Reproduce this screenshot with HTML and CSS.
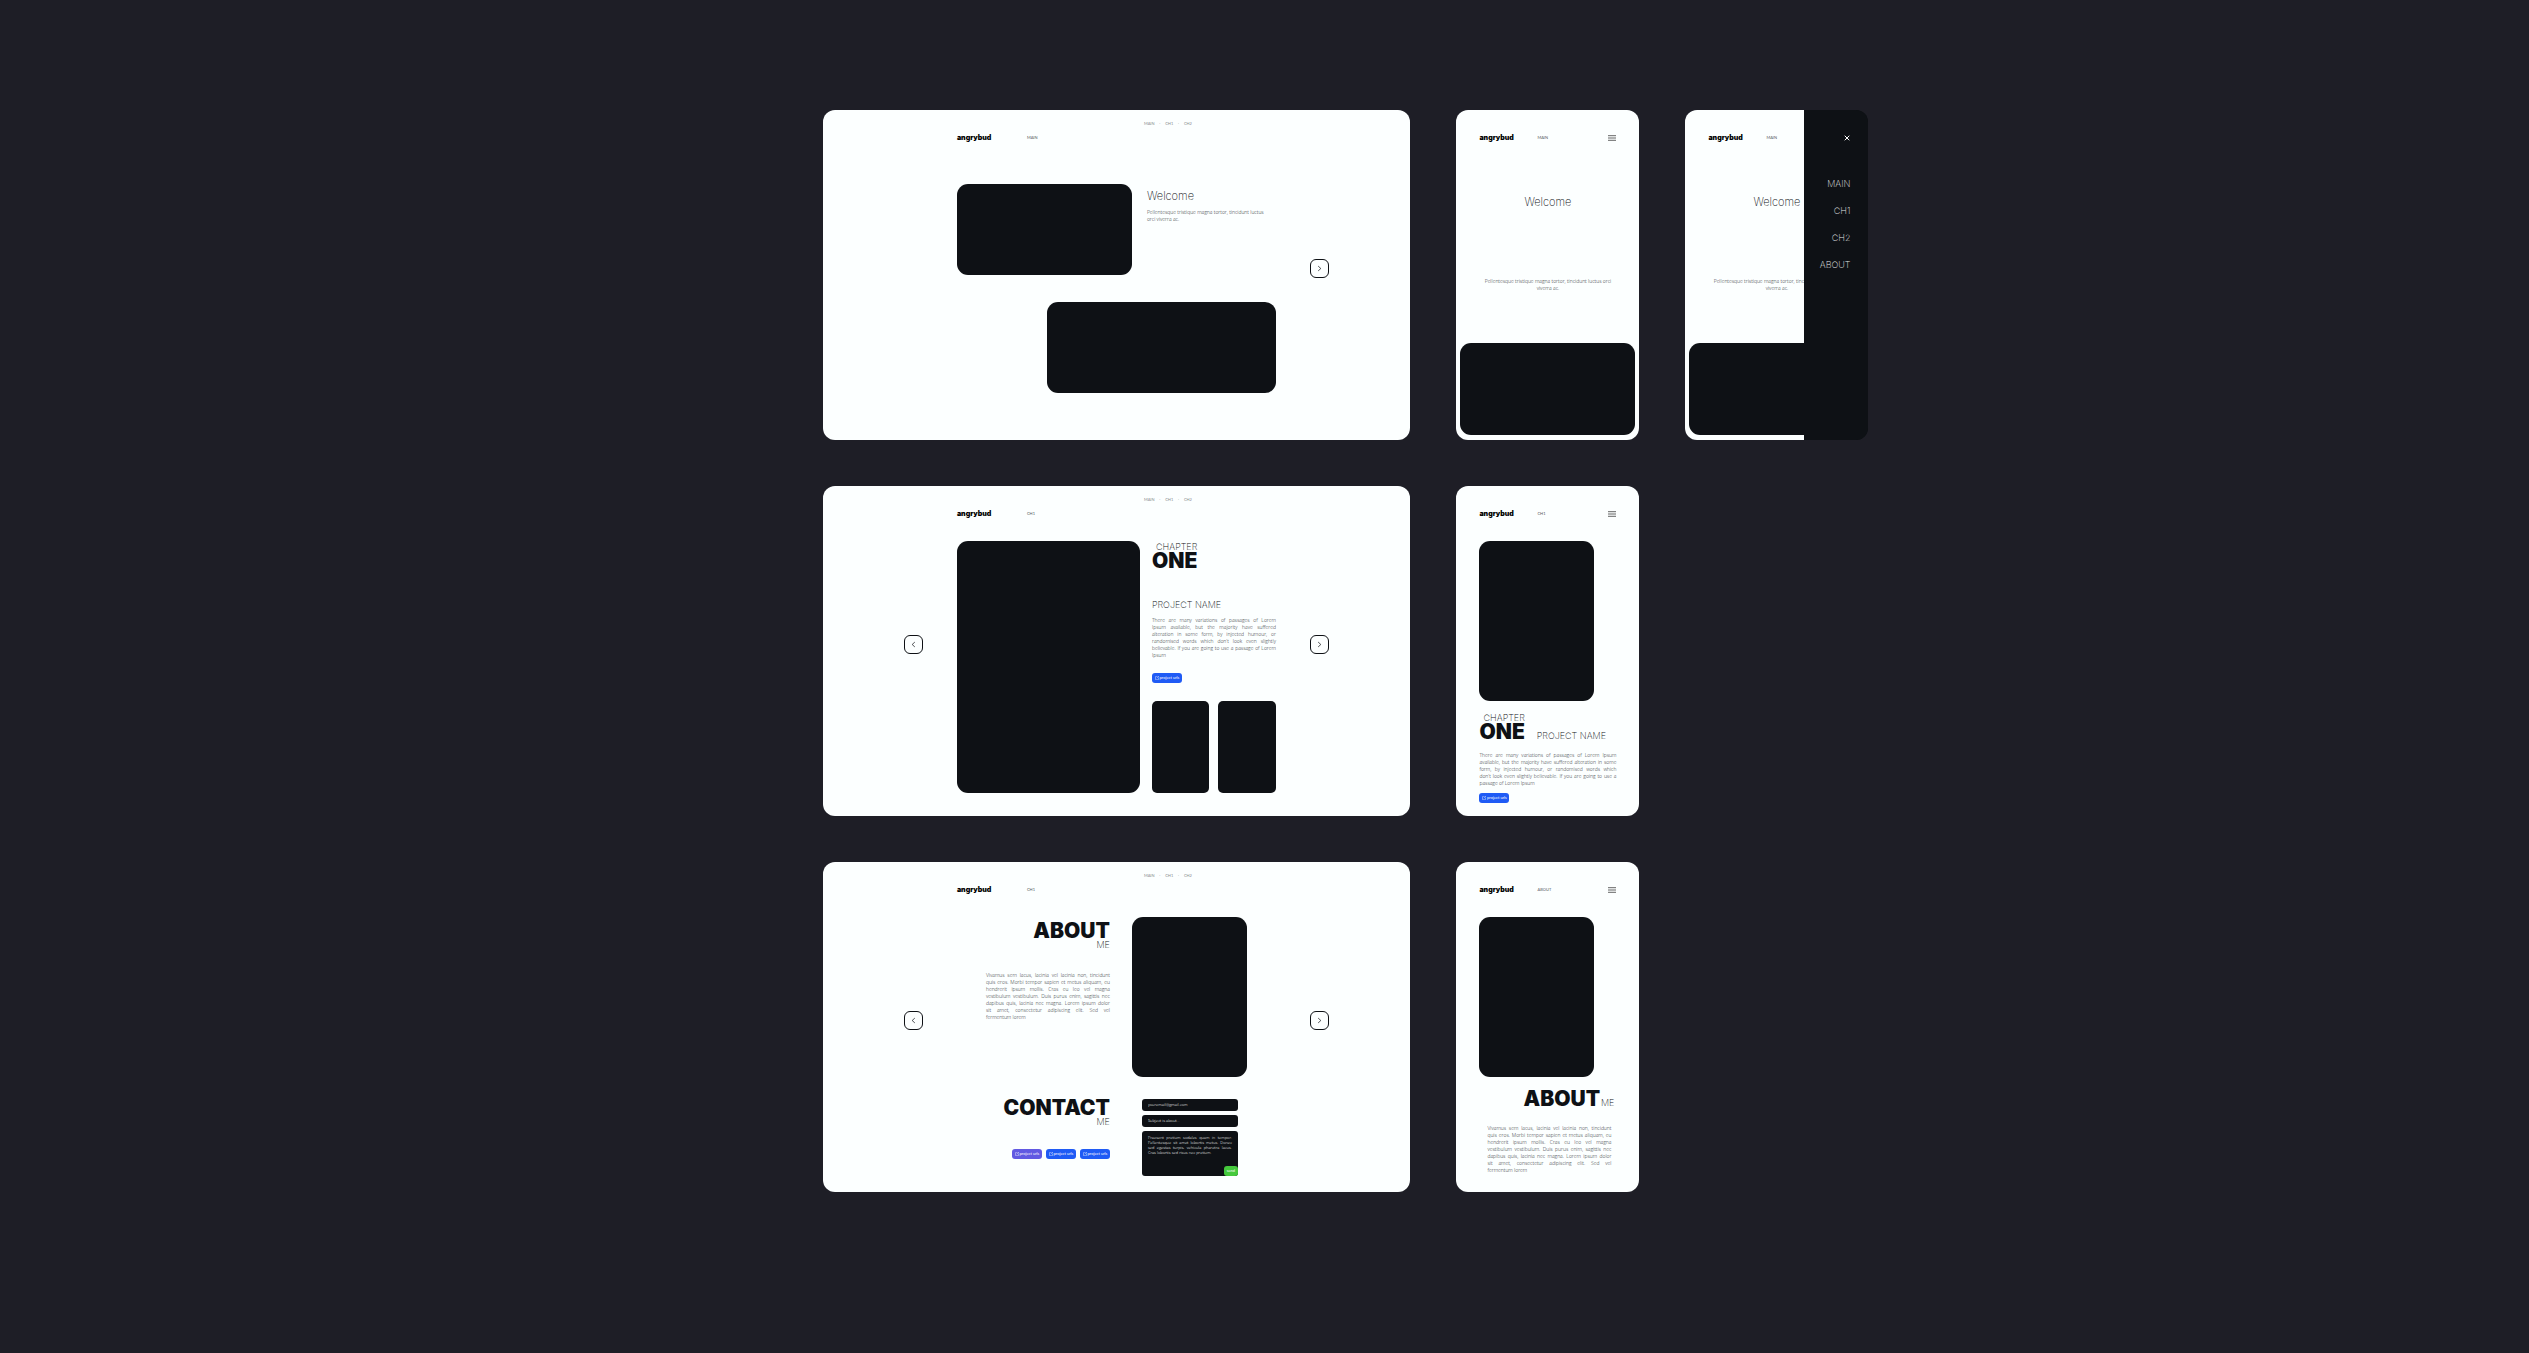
FILE: index.html
```
<!DOCTYPE html>
<html lang="en">
<head>
<meta charset="utf-8">
<meta name="viewport" content="width=device-width, initial-scale=1">
<title>angrybud</title>
<link rel="stylesheet" href="styles.css">
</head>
<body>
<svg width="0" height="0" class="defs" aria-hidden="true">
  <symbol id="next" viewBox="0 0 19 19"><path d="M8 6.800l3 2.700-3 2.700" fill="none" stroke="currentColor" stroke-width=".8"/></symbol>
  <symbol id="prev" viewBox="0 0 19 19"><path d="M11 6.800l-3 2.700 3 2.700" fill="none" stroke="currentColor" stroke-width=".8"/></symbol>
  <symbol id="burger" viewBox="0 0 8 6"><path d="M0 .7h8M0 3h8M0 5.300h8" fill="none" stroke="currentColor" stroke-width=".7"/></symbol>
  <symbol id="close" viewBox="0 0 6 6"><path d="M.7.7l4.600 4.600M5.300.7L.7 5.300" fill="none" stroke="currentColor" stroke-width="1"/></symbol>
  <symbol id="out" viewBox="0 0 4 4"><path d="M2 .6H.5v3h3V2M2.400.4h1.200v1.200M3.500.5L1.800 2.200" fill="none" stroke="currentColor" stroke-width=".4"/></symbol>
</svg>
<main class="board">

  <section class="screen desktop">
    <div class="content">
      <nav class="crumbs"><a href="#main">MAIN</a><i>·</i><a href="#ch1">CH1</a><i>·</i><a href="#ch2">CH2</a></nav>
      <header class="bar"><strong class="brand">angrybud</strong><span class="where">MAIN</span></header>
      <div class="hero">
        <div class="shot wide"></div>
        <div class="intro">
          <h1 class="welcome">Welcome</h1>
          <p class="copy">Pellentesque tristique magna tortor, tincidunt luctus<br>orci viverra ac.</p>
        </div>
      </div>
      <div class="shot wider"></div>
    </div>
    <button class="arrow right" aria-label="Next"><svg><use href="#next"/></svg></button>
  </section>

  <section class="screen mobile">
    <header class="bar"><strong class="brand">angrybud</strong><span class="where">MAIN</span><button class="icon" aria-label="Menu"><svg class="burger"><use href="#burger"/></svg></button></header>
    <h1 class="welcome">Welcome</h1>
    <p class="copy middle">Pellentesque tristique magna tortor, tincidunt luctus orci<br>viverra ac.</p>
    <div class="shot foot"></div>
  </section>

  <section class="screen mobile open">
    <header class="bar"><strong class="brand">angrybud</strong><span class="where">MAIN</span></header>
    <h1 class="welcome">Welcome</h1>
    <p class="copy middle">Pellentesque tristique magna tortor, tincidunt luctus orci<br>viverra ac.</p>
    <div class="shot foot"></div>
    <nav class="drawer">
      <button class="icon" aria-label="Close"><svg class="close"><use href="#close"/></svg></button>
      <a href="#main">MAIN</a><a href="#ch1">CH1</a><a href="#ch2">CH2</a><a href="#about">ABOUT</a>
    </nav>
  </section>

  <section class="screen desktop">
    <button class="arrow left" aria-label="Previous"><svg><use href="#prev"/></svg></button>
    <div class="content">
      <nav class="crumbs"><a href="#main">MAIN</a><i>·</i><a href="#ch1">CH1</a><i>·</i><a href="#ch2">CH2</a></nav>
      <header class="bar"><strong class="brand">angrybud</strong><span class="where">CH1</span></header>
      <div class="chapter">
        <div class="shot"></div>
        <div class="details">
          <h2 class="title"><span class="thin">CHAPTER</span><b>ONE</b></h2>
          <h3 class="thin project">PROJECT NAME</h3>
          <p class="copy lines"><span>There are many variations of passages of Lorem</span><span>Ipsum available, but the majority have suffered</span><span>alteration in some form, by injected humour, or</span><span>randomised words which don't look even slightly</span><span>believable. If you are going to use a passage of Lorem</span><span>Ipsum</span></p>
          <a class="tag" href="#project"><svg><use href="#out"/></svg>project urls</a>
          <div class="thumbs"><div class="shot small"></div><div class="shot small"></div></div>
        </div>
      </div>
    </div>
    <button class="arrow right" aria-label="Next"><svg><use href="#next"/></svg></button>
  </section>

  <section class="screen mobile first">
    <header class="bar"><strong class="brand">angrybud</strong><span class="where">CH1</span><button class="icon" aria-label="Menu"><svg class="burger"><use href="#burger"/></svg></button></header>
    <div class="shot portrait"></div>
    <div class="heads">
      <h2 class="title"><span class="thin">CHAPTER</span><b>ONE</b></h2>
      <h3 class="thin">PROJECT NAME</h3>
    </div>
    <p class="copy lines"><span>There are many variations of passages of Lorem Ipsum</span><span>available, but the majority have suffered alteration in some</span><span>form, by injected humour, or randomised words which</span><span>don't look even slightly believable. If you are going to use a</span><span>passage of Lorem Ipsum</span></p>
    <a class="tag" href="#project"><svg><use href="#out"/></svg>project urls</a>
  </section>

  <section class="screen desktop">
    <button class="arrow left" aria-label="Previous"><svg><use href="#prev"/></svg></button>
    <div class="content">
      <nav class="crumbs"><a href="#main">MAIN</a><i>·</i><a href="#ch1">CH1</a><i>·</i><a href="#ch2">CH2</a></nav>
      <header class="bar"><strong class="brand">angrybud</strong><span class="where">CH1</span></header>
      <div class="about">
        <div class="bio">
          <h2 class="title"><b>ABOUT</b><span class="thin">ME</span></h2>
          <p class="copy lines"><span>Vivamus sem lacus, lacinia vel lacinia non, tincidunt</span><span>quis eros. Morbi tempor sapien et metus aliquam, eu</span><span>hendrerit ipsum mollis. Cras eu leo vel magna</span><span>vestibulum vestibulum. Duis purus enim, sagittis nec</span><span>dapibus quis, lacinia nec magna. Lorem ipsum dolor</span><span>sit amet, consectetur adipiscing elit. Sed vel</span><span>fermentum lorem</span></p>
        </div>
        <div class="shot portrait"></div>
      </div>
      <div class="about contact">
        <div class="bio">
          <h2 class="title"><b>CONTACT</b><span class="thin">ME</span></h2>
          <div class="tags">
            <a class="tag violet" href="#project"><svg><use href="#out"/></svg>project urls</a>
            <a class="tag" href="#project"><svg><use href="#out"/></svg>project urls</a>
            <a class="tag" href="#project"><svg><use href="#out"/></svg>project urls</a>
          </div>
        </div>
        <form class="form">
          <input type="email" aria-label="Email" value="youremail@gmail.com">
          <input type="text" aria-label="Subject" value="Subject is about...">
          <div class="message">
            <textarea aria-label="Message">Praesent pretium sodales quam in tempor. Pellentesque sit amet lobortis metus. Donec sed egestas turpis, vehicula pharetra lacus. Cras lobortis sed risus nec pretium.</textarea>
            <button class="send" type="button">send</button>
          </div>
        </form>
      </div>
    </div>
    <button class="arrow right" aria-label="Next"><svg><use href="#next"/></svg></button>
  </section>

  <section class="screen mobile me">
    <header class="bar"><strong class="brand">angrybud</strong><span class="where">ABOUT</span><button class="icon" aria-label="Menu"><svg class="burger"><use href="#burger"/></svg></button></header>
    <div class="shot portrait"></div>
    <h2 class="title inline"><b>ABOUT</b><span class="thin">ME</span></h2>
    <p class="copy lines"><span>Vivamus sem lacus, lacinia vel lacinia non, tincidunt</span><span>quis eros. Morbi tempor sapien et metus aliquam, eu</span><span>hendrerit ipsum mollis. Cras eu leo vel magna</span><span>vestibulum vestibulum. Duis purus enim, sagittis nec</span><span>dapibus quis, lacinia nec magna. Lorem ipsum dolor</span><span>sit amet, consectetur adipiscing elit. Sed vel</span><span>fermentum lorem</span></p>
  </section>

</main>
</body>
</html>
```
FILE: styles.css
```
:root {
  --night: #1e1e26;
  --paper: #fcffff;
  --ink: #0e1115;
  --blue: #1f5bf5;
}
* { box-sizing: border-box; }
body {
  margin: 0;
  min-height: 100vh;
  background: var(--night);
  color: var(--ink);
  font-family: Lato, "Liberation Sans", sans-serif;
}
.defs { position: absolute; }
h1, h2, h3, p { margin: 0; font-weight: 200; }
a { color: inherit; text-decoration: none; }
button { padding: 0; border: 0; background: none; color: inherit; font: inherit; }
svg { display: block; }

/* artboards */
.board {
  display: grid;
  grid-template-columns: 587fr 183fr 183fr;
  gap: 46px;
  padding: 110px 26.12% 110px 32.56%;
}
.screen {
  min-height: 330px;
  border-radius: 12px;
  background: var(--paper);
  overflow: hidden;
}
.desktop { grid-column: 1; display: grid; grid-template-columns: 1fr 320px 1fr; }
.desktop .content { grid-column: 2; }
.mobile { padding: 0 23px; position: relative; display: flex; flex-direction: column; }
.open { background: linear-gradient(to left, var(--ink) 64px, var(--paper) 64px); }

/* header */
.crumbs {
  display: flex;
  justify-content: space-between;
  width: 48px;
  margin-left: 187px;
  padding-top: 11px;
  font-size: 4px;
  line-height: 6px;
  color: #888c8e;
}
.crumbs i { font-style: normal; }
.bar {
  display: grid;
  grid-template-columns: 70px 1fr auto;
  align-items: center;
  height: 10px;
  margin-top: 6px;
}
.mobile .bar { grid-template-columns: 58px 1fr auto; margin-top: 23px; flex: none; }
.brand { font: 900 7px/10px Inter, sans-serif; color: #000; }
.where { font-size: 4px; line-height: 10px; color: #55595d; }
.burger { width: 8px; height: 6px; color: #222; }
.close { width: 6px; height: 6px; }

/* shared pieces */
.shot { border-radius: 11px; background: var(--ink); }
.small { border-radius: 5px; }
.portrait { width: 115px; height: 160px; }
.copy { font: 300 5px/7px "Open Sans", sans-serif; color: #24282c; white-space: nowrap; }
.lines span { display: block; text-align-last: justify; }
.lines span:last-child { text-align-last: left; }
.welcome { font: 200 11px/14px Inter, sans-serif; }
.thin { font: 200 9px/9px Inter, sans-serif; white-space: nowrap; }
.title b { font: 900 21px/17px Inter, sans-serif; }
.title { display: flex; flex-direction: column; align-items: flex-end; width: max-content; }
.tag {
  display: flex;
  align-items: center;
  justify-content: center;
  gap: 1px;
  width: 30px;
  height: 10px;
  border-radius: 3px;
  background: var(--blue);
  color: #fff;
  font-size: 4px;
  line-height: 10px;
  white-space: nowrap;
}
.tag svg { width: 4px; height: 4px; }
.violet { background: #6159e2; }
.arrow {
  width: 19px;
  height: 19px;
  margin-top: 149px;
  border: 1px solid var(--ink);
  border-radius: 6px;
}
.arrow svg { width: 17px; height: 17px; }
.left { grid-column: 1; justify-self: end; margin-right: 34px; }
.right { grid-column: 3; margin-left: 33px; }

/* welcome */
.hero { display: grid; grid-template-columns: 175px 1fr; gap: 15px; margin-top: 41px; }
.wide, .wider { height: 91px; }
.wider { width: 229px; margin: 27px 1px 0 auto; }
.intro { padding-top: 5px; }
.intro .copy { margin-top: 6px; }
.mobile > .welcome { margin-top: 52px; text-align: center; }
.middle { margin-top: 69px; text-align: center; }
.foot { flex: none; height: 92px; margin: auto -19px 5px; }
.drawer {
  position: absolute;
  inset: 0 0 0 auto;
  width: 64px;
  padding: 23px 18px 0 0;
  display: flex;
  flex-direction: column;
  align-items: flex-end;
  background: var(--ink);
  color: #e6e9ea;
  font: 200 9px/27px Inter, sans-serif;
}
.drawer .icon { height: 10px; margin-bottom: 27px; color: #fff; }

/* chapter */
.chapter { display: grid; grid-template-columns: 183px 124px; gap: 12px; height: 252px; margin-top: 22px; }
.details { display: flex; flex-direction: column; padding-top: 1px; }
.title .thin:first-child { margin-bottom: 1px; }
.project { margin-top: 31px; }
.details .copy { margin-top: 8px; }
.details .tag { margin-top: 14px; }
.thumbs { display: grid; grid-template-columns: 1fr 1fr; gap: 9px; height: 92px; margin-top: auto; }
.mobile .portrait { flex: none; margin-top: 22px; }
.heads { display: flex; align-items: flex-end; gap: 12px; margin-top: 12px; }
.first .copy { margin-top: 12px; }
.first .tag { margin-top: 6px; }

/* about and contact */
.about { display: grid; grid-template-columns: 124px 115px; gap: 22px; margin: 22px 0 0 29px; }
.bio { display: flex; flex-direction: column; align-items: flex-end; padding-top: 5px; }
.bio .title { gap: 1px; }
.bio .copy { width: 124px; margin-top: 23px; }
.contact { margin-top: 22px; }
.contact .bio { padding-top: 0; }
.tags { display: flex; gap: 4px; margin-top: 23px; }
.form { display: flex; flex-direction: column; gap: 4px; padding: 0 9px 0 10px; }
.form input, .form textarea {
  width: 100%;
  height: 12px;
  padding: 0 6px;
  border: 0;
  border-radius: 3px;
  background: var(--ink);
  color: #fff;
  font: 300 4px/12px "Open Sans", sans-serif;
}
.message { position: relative; }
.form textarea { display: block; height: 45px; padding: 4px 6px; line-height: 5px; text-align: justify; resize: none; overflow: hidden; }
.send {
  position: absolute;
  right: 0;
  bottom: 0;
  width: 14px;
  height: 10px;
  border-radius: 3px;
  background: #45c93c;
  color: #fff;
  font-size: 4px;
  line-height: 10px;
}
.me .inline { flex-direction: row; align-items: flex-end; gap: 1px; margin: 13px 2px 0 auto; }
.me .copy { margin: 18px 5px 0 8px; }
```
